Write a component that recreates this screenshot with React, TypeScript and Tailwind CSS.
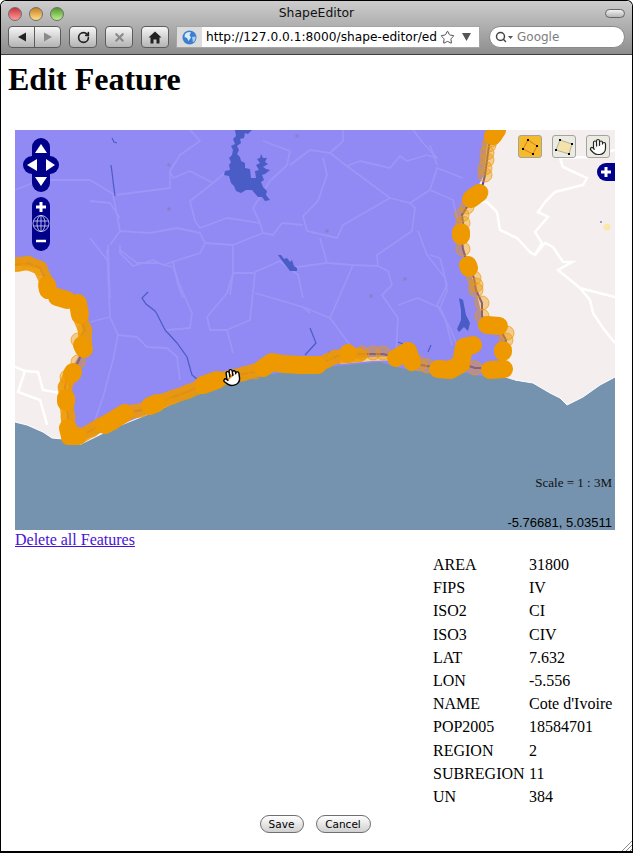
import React from "react";
import { Hand, RotateCw, Search, Star, X } from "lucide-react";

type Pt = [number, number];

const toPoints = (pts: Pt[]) => pts.map((p) => p.join(",")).join(" ");

const sea: Pt[] = [
  [15, 422], [27, 425], [43, 432], [52, 438], [63, 439], [80, 445], [115, 428], [160, 410], [200, 390], [240, 378],
  [280, 373], [310, 373], [325, 367], [380, 362], [400, 368], [453, 377], [463, 372], [473, 375], [507, 378], [513, 380],
  [533, 383], [550, 393], [560, 398], [567, 405], [583, 397], [600, 385], [615, 377], [615, 530], [15, 530],
];

const country: Pt[] = [
  [15, 130], [497, 130], [487, 145], [484, 175], [473, 196], [462, 215], [461, 233], [463, 249], [468, 265], [476, 290],
  [482, 316], [498, 325], [507, 340], [505, 370], [480, 380], [400, 370], [300, 375], [200, 392], [120, 425], [70, 445],
  [68, 400], [68, 375], [82, 350], [82, 320], [78, 303], [50, 292], [40, 268], [15, 265],
];

const coastline: Pt[] = [
  [497, 132], [489, 145], [487, 160], [485, 175], [481, 192], [473, 196], [467, 207], [462, 215], [463, 223], [461, 233],
  [463, 249], [468, 265], [474, 278], [476, 290], [482, 303], [482, 316], [488, 325], [498, 325], [506, 340], [503, 350],
  [503, 367], [490, 368], [475, 368], [460, 363], [450, 370], [440, 368], [427, 366], [410, 363], [395, 357], [383, 354],
  [373, 354], [362, 354], [348, 353], [335, 357], [318, 365], [300, 365], [283, 363], [272, 365], [263, 368], [255, 372],
  [243, 374], [230, 377], [217, 380], [203, 385], [187, 392], [173, 397], [157, 403], [142, 410], [125, 413], [113, 423],
  [100, 425], [92, 430], [78, 438], [68, 438], [68, 430], [68, 417], [66, 400], [65, 387], [67, 377], [73, 372],
  [78, 362], [84, 349], [78, 340], [85, 330], [80, 318], [78, 303], [67, 300], [57, 297], [48, 292], [47, 283],
  [40, 268], [28, 263], [15, 265],
];

const ghostHandles: Pt[] = [
  [491, 140], [489, 145], [487, 153], [487, 160], [485, 168], [485, 175], [481, 192], [467, 207], [462, 215], [463, 223],
  [463, 249], [474, 278], [476, 285], [476, 290], [482, 303], [482, 316], [506, 340], [507, 333], [475, 368], [427, 366],
  [420, 364], [383, 353], [373, 353], [362, 353], [335, 357], [327, 361], [255, 372], [243, 374], [230, 377], [187, 392],
  [173, 397], [165, 400], [113, 423], [100, 425], [92, 430], [68, 417], [65, 387], [67, 377], [78, 362], [78, 340],
  [85, 330], [67, 300], [47, 283], [40, 268], [28, 263], [19, 264],
];

// stretches where the handles overlap closely enough to look almost opaque
const heavyRuns: Pt[][] = [
  [[263, 368], [243, 374], [217, 380], [187, 392], [173, 397], [157, 403], [142, 410], [125, 413], [100, 425], [78, 438]],
  [[68, 438], [68, 417], [66, 400], [65, 387], [70, 375]],
  [[85, 345], [85, 330], [80, 318], [78, 303]],
  [[48, 292], [47, 283], [40, 268], [28, 263], [15, 265]],
  [[360, 355], [335, 357], [318, 365]],
];

// handles that sit on top of each other and read as solid orange
const solidRuns: Pt[][] = [
  [[497, 130], [493, 136]],
  [[479, 193], [471, 199]],
  [[461, 232], [461, 236]],
  [[468, 265], [469, 268]],
  [[487, 325], [499, 326]],
  [[503, 350], [503, 352]],
  [[504, 369], [490, 370]],
  [[473, 345], [464, 347], [461, 364], [450, 370], [438, 369]],
  [[412, 362], [408, 351], [396, 358]],
  [[348, 353], [348, 354]],
  [[318, 365], [300, 365], [283, 364], [272, 362], [263, 368]],
  [[217, 380], [203, 385]],
  [[157, 403], [150, 406]],
  [[125, 413], [105, 425]],
  [[78, 436], [70, 436], [68, 428]],
  [[66, 398], [66, 402]],
  [[73, 372], [72, 374]],
  [[84, 349], [82, 345]],
  [[78, 303], [80, 315]],
  [[67, 300], [57, 297]],
  [[48, 290], [47, 285]],
];

const regionLines: Pt[][] = [
  [[90, 180], [115, 195], [170, 188], [170, 171], [180, 155], [200, 141], [190, 130]],
  [[170, 171], [173, 178], [190, 171], [213, 183], [227, 171]],
  [[213, 183], [190, 201], [195, 221], [200, 228], [227, 218], [260, 223], [263, 233], [273, 235], [282, 223], [303, 225]],
  [[110, 245], [120, 231], [150, 233], [177, 228], [200, 233], [205, 243], [233, 245], [263, 233]],
  [[120, 231], [117, 215], [113, 195]],
  [[120, 245], [120, 253], [133, 266], [153, 260], [163, 265], [200, 253], [205, 243]],
  [[173, 261], [178, 285], [183, 298]],
  [[233, 245], [233, 273], [230, 295]],
  [[233, 273], [253, 273], [280, 261], [298, 275], [303, 298]],
  [[108, 245], [110, 298]],
  [[90, 238], [107, 260]],
  [[90, 201], [110, 203], [120, 218]],
  [[263, 141], [290, 151], [287, 165], [270, 181], [253, 208], [260, 223]],
  [[290, 165], [310, 150], [330, 153], [343, 141], [343, 130]],
  [[330, 153], [347, 166], [360, 161], [390, 168], [400, 156], [407, 161], [427, 155], [437, 158], [423, 143], [413, 130]],
  [[347, 166], [390, 198], [410, 203], [430, 190], [437, 168], [463, 178]],
  [[323, 158], [327, 175], [318, 201], [303, 216], [307, 231], [337, 238], [343, 225], [390, 198]],
  [[430, 190], [453, 200], [457, 218]],
  [[410, 203], [415, 208], [412, 231], [377, 255], [378, 266], [353, 265], [327, 263], [320, 238]],
  [[290, 268], [327, 263]],
  [[418, 231], [427, 255], [445, 278], [447, 291], [440, 308]],
  [[353, 265], [330, 318]],
  [[378, 266], [388, 271], [392, 285], [382, 295], [398, 318], [396, 355]],
  [[398, 305], [418, 298], [440, 308], [445, 318], [452, 345]],
  [[107, 250], [110, 317], [118, 335], [113, 360], [103, 397], [95, 420]],
  [[90, 322], [110, 317]],
  [[118, 335], [137, 337], [147, 347], [167, 348], [177, 357], [180, 380]],
  [[173, 267], [183, 293], [192, 313], [190, 328], [167, 330]],
  [[120, 250], [137, 263], [157, 263], [173, 267]],
  [[207, 317], [227, 293], [233, 273]],
  [[207, 317], [210, 330], [227, 330], [233, 353]],
  [[227, 330], [250, 320], [255, 273]],
  [[255, 293], [303, 307], [310, 313]],
  [[430, 145], [437, 165]],
  [[430, 255], [440, 258], [447, 285], [437, 305], [450, 328], [457, 345]],
  [[303, 307], [330, 318], [350, 345]],
  [[15, 190], [40, 180], [90, 180]],
];

const landBorders: Pt[][] = [
  [[560, 158], [563, 167], [587, 178], [583, 185], [555, 192], [545, 202], [538, 212], [548, 217], [535, 232], [542, 243], [535, 255], [530, 252], [517, 238], [500, 230], [497, 212], [487, 202], [480, 202]],
  [[535, 255], [545, 243], [553, 247], [563, 262], [572, 262], [558, 270], [580, 288], [615, 297]],
  [[580, 288], [590, 300], [593, 313], [603, 328], [615, 343]],
  [[560, 158], [587, 157], [615, 150]],
  [[15, 367], [25, 371], [18, 392], [40, 400], [45, 417], [47, 425]],
  [[25, 371], [38, 372], [43, 390], [60, 393], [67, 385]],
];

const rivers: Pt[][] = [
  [[112, 138], [114, 142], [117, 143]],
  [[111, 165], [112, 172], [113, 181], [115, 196]],
  [[148, 292], [142, 298], [146, 304], [155, 311], [157, 314], [160, 320], [165, 330], [177, 343], [187, 357], [190, 368], [192, 375], [198, 380]],
  [[310, 328], [316, 343], [305, 355]],
  [[431, 345], [428, 352]],
  [[398, 342], [403, 344]],
  [[330, 352], [325, 358]],
];

const lakes: Pt[][] = [
  [
    [235, 130], [252, 130], [248, 134], [245, 133], [244, 138], [240, 139], [241, 143], [237, 146], [239, 150], [237, 154],
    [240, 157], [241, 161], [245, 163], [245, 168], [250, 169], [251, 178], [256, 178], [255, 171], [259, 170], [256, 165],
    [260, 163], [257, 159], [260, 158], [261, 154], [263, 158], [267, 158], [265, 162], [268, 164], [263, 167], [266, 169],
    [270, 170], [265, 174], [262, 175], [264, 180], [261, 182], [263, 187], [267, 191], [266, 195], [270, 200], [265, 201],
    [262, 197], [258, 197], [252, 190], [246, 190], [241, 193], [236, 191], [234, 186], [231, 183], [229, 176], [224, 175],
    [225, 171], [230, 170], [229, 165], [231, 162], [229, 158], [232, 155], [233, 150], [231, 146], [235, 144], [233, 139],
    [236, 136],
  ],
  [[278, 255], [281, 255], [284, 259], [287, 258], [290, 262], [292, 260], [294, 266], [297, 268], [297, 271], [290, 271], [287, 267], [283, 262]],
  [[459, 298], [463, 300], [466, 315], [470, 323], [468, 331], [464, 327], [459, 332], [457, 329], [461, 320], [461, 310]],
];

const mapDots: Pt[] = [[297, 136], [169, 165], [169, 209], [327, 231], [371, 296], [405, 279]];

const fields: [string, string][] = [
  ["AREA", "31800"],
  ["FIPS", "IV"],
  ["ISO2", "CI"],
  ["ISO3", "CIV"],
  ["LAT", "7.632"],
  ["LON", "-5.556"],
  ["NAME", "Cote d'Ivoire"],
  ["POP2005", "18584701"],
  ["REGION", "2"],
  ["SUBREGION", "11"],
  ["UN", "384"],
];

const toolButton =
  "flex h-[22px] items-center justify-center rounded-[4px] border border-[#5c5c5c] bg-gradient-to-b from-[#f6f6f6] to-[#b4b4b4]";

const TrafficLight = ({ color, shine }: { color: string; shine: string }) => (
  <span
    className={`h-[14px] w-[14px] rounded-full border border-[#6e6e6e] bg-gradient-to-b ${color} ${shine}`}
  />
);

const BrowserChrome = () => (
  <div className="h-[54px] shrink-0 rounded-t-[6px] border-b border-[#3e3e3e] bg-gradient-to-b from-[#cdcdcd] to-[#8e8e8e] font-['DejaVu_Sans',sans-serif]">
    <div className="relative flex h-[25px] items-center pl-[7px]">
      <div className="flex gap-[7px]">
        <TrafficLight color="from-[#c9303a]" shine="to-[#ff9aa0]" />
        <TrafficLight color="from-[#c9801a]" shine="to-[#ffe08a]" />
        <TrafficLight color="from-[#4f9a2a]" shine="to-[#bdf08a]" />
      </div>
      <span className="flex-1 pr-[36px] text-center text-[12.4px] text-[#111]">ShapeEditor</span>
      <span className="mr-[7px] h-[9px] w-[20px] rounded-full border border-[#666] bg-gradient-to-b from-[#f2f2f2] to-[#b5b5b5]" />
    </div>
    <div className="flex items-center pl-[7px]">
      <div className={`${toolButton} w-[53px]`}>
        <span className="flex h-full flex-1 items-center justify-center border-r border-[#5c5c5c]">
          <svg width="10" height="10" viewBox="0 0 10 10">
            <polygon points="1,5 9,0.5 9,9.5" fill="#222" />
          </svg>
        </span>
        <span className="flex h-full flex-1 items-center justify-center">
          <svg width="10" height="10" viewBox="0 0 10 10">
            <polygon points="9,5 1,0.5 1,9.5" fill="#8a8a8a" />
          </svg>
        </span>
      </div>
      <div className={`${toolButton} ml-[8px] w-[28px]`}>
        <RotateCw size={13} strokeWidth={3} color="#222" />
      </div>
      <div className={`${toolButton} ml-[8px] w-[28px]`}>
        <X size={13} strokeWidth={4} color="#8a8a8a" />
      </div>
      <div className={`${toolButton} ml-[8px] w-[28px]`}>
        <svg width="14" height="13" viewBox="0 0 14 13">
          <path d="M7 0.5 L13.5 6.5 L11.5 6.5 L11.5 12.5 L8.5 12.5 L8.5 8.5 L5.5 8.5 L5.5 12.5 L2.5 12.5 L2.5 6.5 L0.5 6.5 Z" fill="#222" />
        </svg>
      </div>
      <div className="ml-[7px] flex h-[22px] w-[304px] items-center border border-[#a5a5a5] bg-white">
        <span className="flex h-full w-[25px] shrink-0 items-center justify-center bg-[#dcdcdc]">
          <svg width="15" height="15" viewBox="0 0 15 15">
            <circle cx="7.5" cy="7.5" r="7" fill="#3c7fd0" />
            <path d="M3 4 Q6 1 9 2.5 L7.5 5 L9 7.5 L6.5 11 L5 8 L2.5 7 Z" fill="#d9ecfa" />
            <path d="M10 7 L13.5 6.5 Q14 10 11 12.5 Z" fill="#a8d0f2" />
          </svg>
        </span>
        <span className="flex-1 overflow-hidden whitespace-nowrap pl-[4px] text-[12.2px] text-black">
          http://127.0.0.1:8000/shape-editor/ed
        </span>
        <Star size={15} strokeWidth={1.5} color="#444" />
        <svg width="9" height="8" viewBox="0 0 9 8" className="ml-[7px] mr-[8px]">
          <polygon points="0,0 9,0 4.5,8" fill="#555" />
        </svg>
      </div>
      <div className="ml-[9px] flex h-[22px] w-[136px] items-center rounded-full border border-[#8a8a8a] bg-white pl-[5px]">
        <Search size={12} strokeWidth={3} color="#444" />
        <svg width="5" height="3" viewBox="0 0 5 3" className="ml-[1px]">
          <polygon points="0,0 5,0 2.5,3" fill="#555" />
        </svg>
        <span className="ml-[4px] text-[12px] text-[#7d7d7d]">Google</span>
      </div>
    </div>
  </div>
);

const MapDrawing = () => (
  <svg width="600" height="400" viewBox="15 130 600 400" className="block">
    <rect x="15" y="130" width="600" height="400" fill="#f5eeee" />
    {landBorders.map((line, i) => (
      <polyline key={i} points={toPoints(line)} fill="none" stroke="#ffffff" strokeWidth="2.5" />
    ))}
    <polygon points={toPoints(country)} fill="#9189f4" />
    {regionLines.map((line, i) => (
      <polyline key={i} points={toPoints(line)} fill="none" stroke="#9c96f7" strokeWidth="1.8" strokeLinejoin="round" />
    ))}
    {rivers.map((line, i) => (
      <polyline key={i} points={toPoints(line)} fill="none" stroke="#4a5cc6" strokeWidth="1.2" />
    ))}
    {lakes.map((shape, i) => (
      <polygon key={i} points={toPoints(shape)} fill="#4a5cc6" />
    ))}
    {mapDots.map(([x, y], i) => (
      <circle key={i} cx={x} cy={y} r="1.8" fill="#8f7fc8" />
    ))}
    <circle cx="607" cy="227" r="3.5" fill="#fbe8a8" />
    <circle cx="601" cy="222" r="1" fill="#7f7fc0" />
    <polygon points={toPoints(sea)} fill="#7593ae" />
    <polyline points="515,380 533,383 550,393 560,398 567,405 583,397 600,385 615,377" fill="none" stroke="#ffffff" strokeWidth="1" />
    <polyline points="15,422 27,425 43,432 52,438 63,439" fill="none" stroke="#ffffff" strokeWidth="1" />
    <polyline points="340,362 372,359 400,358" fill="none" stroke="#f7cf8e" strokeWidth="4" />
    <polyline points={toPoints(coastline)} fill="none" stroke="#4a3cc0" strokeWidth="2" />
    {ghostHandles.map(([x, y], i) => (
      <circle key={i} cx={x} cy={y} r="7" fill="#ee9900" fillOpacity="0.4" stroke="#ee9900" strokeOpacity="0.7" />
    ))}
    {heavyRuns.map((run, i) => (
      <polyline
        key={i}
        points={toPoints(run)}
        fill="none"
        stroke="#ee9900"
        strokeOpacity="0.85"
        strokeWidth="14"
        strokeLinecap="round"
        strokeLinejoin="round"
      />
    ))}
    {solidRuns.map((run, i) => (
      <polyline
        key={i}
        points={toPoints(run)}
        fill="none"
        stroke="#ee9900"
        strokeWidth="18"
        strokeLinecap="round"
        strokeLinejoin="round"
      />
    ))}
    {/* pan control */}
    <rect x="32" y="138" width="18" height="54" rx="9" fill="#00008b" />
    <rect x="23" y="156" width="36" height="18" rx="9" fill="#00008b" />
    <polygon points="41,144 35,153 47,153" fill="#ffffff" />
    <polygon points="41,186 35,177 47,177" fill="#ffffff" />
    <polygon points="27,165 37,159 37,171" fill="#ffffff" />
    <polygon points="55,165 46,159 46,171" fill="#ffffff" />
    {/* zoom control */}
    <rect x="32" y="197" width="18" height="54" rx="9" fill="#00008b" />
    <path d="M36 207 H46 M41 202 V212" stroke="#ffffff" strokeWidth="3" />
    <path d="M36 241 H46" stroke="#ffffff" strokeWidth="2.5" />
    <g fill="none" stroke="#d8d8f4" strokeWidth="0.8">
      <circle cx="41" cy="223.5" r="8" />
      <ellipse cx="41" cy="223.5" rx="4" ry="8" />
      <path d="M41 215.5 V231.5 M33.5 221 H48.5 M33.5 226 H48.5" />
    </g>
  </svg>
);

const ToolIcon = ({ active, children }: { active?: boolean; children: React.ReactNode }) => (
  <div
    className={`flex h-[23px] w-[24px] items-center justify-center rounded-[3px] border border-[#a3a3a3] ${
      active ? "bg-[#f4bb2a]" : "bg-[#ecebe2]"
    }`}
  >
    {children}
  </div>
);

const MapPanel = () => (
  <div className="relative h-[400px] w-[600px]">
    <MapDrawing />
    <div className="absolute right-[5px] top-[5px] flex gap-[10px]">
      <ToolIcon active>
        <svg width="20" height="20" viewBox="0 0 20 20">
          <polygon points="8,3 17,9 13,17 3,12" fill="none" stroke="#e0602a" strokeWidth="0.8" />
          <g fill="#000">
            <rect x="7" y="2" width="2" height="2" />
            <rect x="16" y="8" width="2" height="2" />
            <rect x="12" y="16" width="2" height="2" />
            <rect x="2" y="11" width="2" height="2" />
          </g>
        </svg>
      </ToolIcon>
      <ToolIcon>
        <svg width="20" height="20" viewBox="0 0 20 20">
          <polygon points="6,3 18,7 15,17 2,13" fill="#f3e3ab" stroke="#888" strokeWidth="0.6" />
          <g fill="#000">
            <rect x="5" y="2" width="2" height="2" />
            <rect x="17" y="6" width="2" height="2" />
            <rect x="14" y="16" width="2" height="2" />
            <rect x="1" y="12" width="2" height="2" />
          </g>
        </svg>
      </ToolIcon>
      <ToolIcon>
        <Hand size={18} color="#222" fill="#ffffff" strokeWidth={1.6} />
      </ToolIcon>
    </div>
    <div className="absolute right-0 top-[33px] flex h-[18px] w-[18px] items-center justify-center rounded-l-[9px] bg-[#00008b]">
      <svg width="12" height="12" viewBox="0 0 12 12">
        <path d="M1 6 H11 M6 1 V11" stroke="#ffffff" strokeWidth="3" />
      </svg>
    </div>
    <Hand
      size={19}
      color="#000"
      fill="#ffffff"
      strokeWidth={1.8}
      className="absolute left-[207px] top-[238px] rotate-[-8deg]"
    />
    <span className="absolute right-[3px] top-[345px] font-['Liberation_Serif',serif] text-[13px] leading-[15px] text-[#111]">
      Scale = 1 : 3M
    </span>
    <span className="absolute right-[3px] top-[386px] font-['Liberation_Sans',sans-serif] text-[13px] leading-[14px] text-black">
      -5.76681, 5.03511
    </span>
  </div>
);

const FormButton = ({ label, width }: { label: string; width: string }) => (
  <button
    type="button"
    className={`h-[18px] ${width} rounded-full border border-[#6f6f6f] bg-gradient-to-b from-white to-[#d0d0d0] font-['DejaVu_Sans',sans-serif] text-[10.5px] leading-[16px] text-black`}
  >
    {label}
  </button>
);

export default function App() {
  return (
    <div className="relative flex h-[853px] w-[633px] flex-col overflow-hidden rounded-t-[6px] border border-b-2 border-black bg-white font-['Liberation_Serif',serif] text-black">
      <BrowserChrome />
      <main className="flex-1">
        <h1 className="ml-[7px] mt-[6px] text-[32px] font-bold leading-[37px]">Edit Feature</h1>
        <div className="ml-[14px] mt-[32px]">
          <MapPanel />
          <a href="#" className="block h-[18px] text-[16px] leading-[19px] text-[#4512d8] underline">
            Delete all Features
          </a>
          <div className="mt-[5px] grid w-[597px] grid-cols-[96px_83px] justify-end text-[16px] leading-[23.2px]">
            {fields.map(([key, value]) => (
              <React.Fragment key={key}>
                <span className="whitespace-nowrap">{key}</span>
                <span className="whitespace-nowrap">{value}</span>
              </React.Fragment>
            ))}
          </div>
        </div>
        <div className="mt-[7px] flex justify-center gap-[12px] pr-[3px]">
          <FormButton label="Save" width="w-[44px]" />
          <FormButton label="Cancel" width="w-[55px]" />
        </div>
      </main>
      <svg width="12" height="12" viewBox="0 0 12 12" className="absolute bottom-0 right-0">
        <path d="M2 12 L12 2 M6 12 L12 6 M10 12 L12 10" stroke="#8a8a8a" strokeWidth="1" />
      </svg>
    </div>
  );
}
